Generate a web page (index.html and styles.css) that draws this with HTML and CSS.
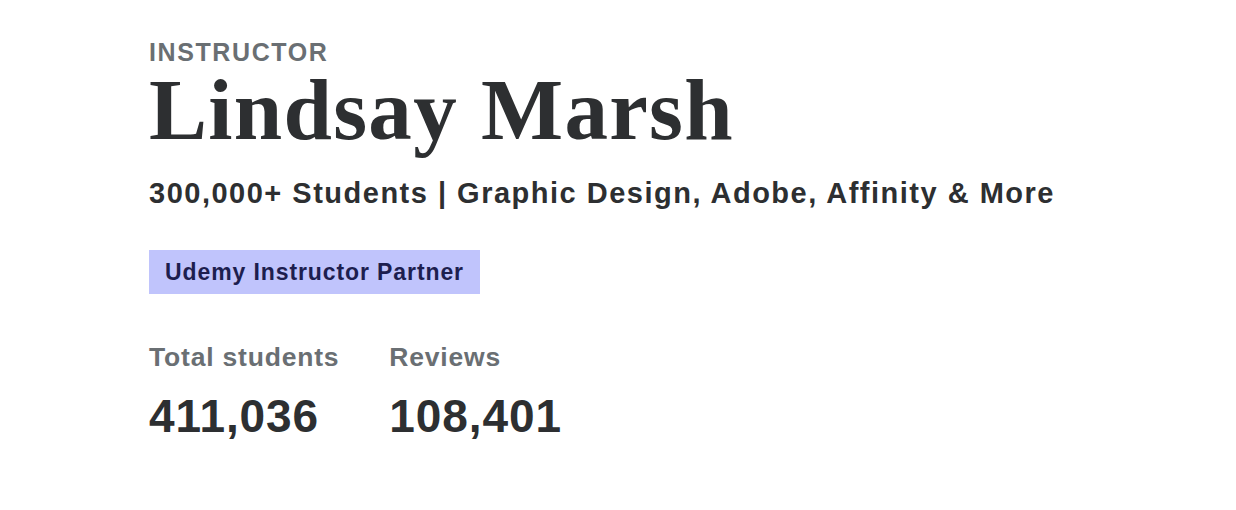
FILE: index.html
```html
<!DOCTYPE html>
<html lang="en">
<head>
<meta charset="utf-8">
<title>Lindsay Marsh</title>
<link rel="stylesheet" href="styles.css">
</head>
<body>
<main class="profile">
  <div class="eyebrow">INSTRUCTOR</div>
  <h1 class="name">Lindsay Marsh</h1>
  <h2 class="headline">300,000+ Students | Graphic Design, Adobe, Affinity &amp; More</h2>
  <div class="badge">Udemy Instructor Partner</div>
  <div class="stats">
    <div class="stat">
      <div class="stat-label">Total students</div>
      <div class="stat-value">411,036</div>
    </div>
    <div class="stat">
      <div class="stat-label">Reviews</div>
      <div class="stat-value">108,401</div>
    </div>
  </div>
</main>
</body>
</html>
```

FILE: styles.css
```css
html, body {
  margin: 0;
  padding: 0;
  background: #ffffff;
}
body {
  font-family: "Liberation Sans", Arial, sans-serif;
  color: #2d2f31;
}
.profile {
  display: flex;
  flex-direction: column;
  align-items: flex-start;
  padding: 42px 0 0 149px;
}
.eyebrow {
  font-size: 25px;
  font-weight: 700;
  color: #6a6f73;
  line-height: 20px;
  letter-spacing: 1.6px;
}
.name {
  margin: 6px 0 0;
  font-family: "Liberation Serif", "Times New Roman", serif;
  font-size: 87px;
  font-weight: 700;
  line-height: 83px;
  letter-spacing: 1.3px;
}
.headline {
  margin: 24px 0 0;
  font-size: 29px;
  font-weight: 700;
  line-height: 36px;
  letter-spacing: 1.5px;
}
.badge {
  margin-top: 39px;
  background: #c0c4fc;
  color: #1d1e4f;
  font-size: 23px;
  font-weight: 700;
  line-height: 44px;
  letter-spacing: 0.9px;
  padding: 0 16px;
}
.stats {
  display: flex;
  gap: 50px;
  margin-top: 46px;
}
.stat {
  display: flex;
  flex-direction: column;
}
.stat-label {
  font-size: 26.5px;
  font-weight: 700;
  color: #6a6f73;
  line-height: 34px;
  letter-spacing: 0.8px;
}
.stat-value {
  margin-top: 17px;
  font-size: 46px;
  font-weight: 700;
  line-height: 50px;
  letter-spacing: 0.9px;
}
```
